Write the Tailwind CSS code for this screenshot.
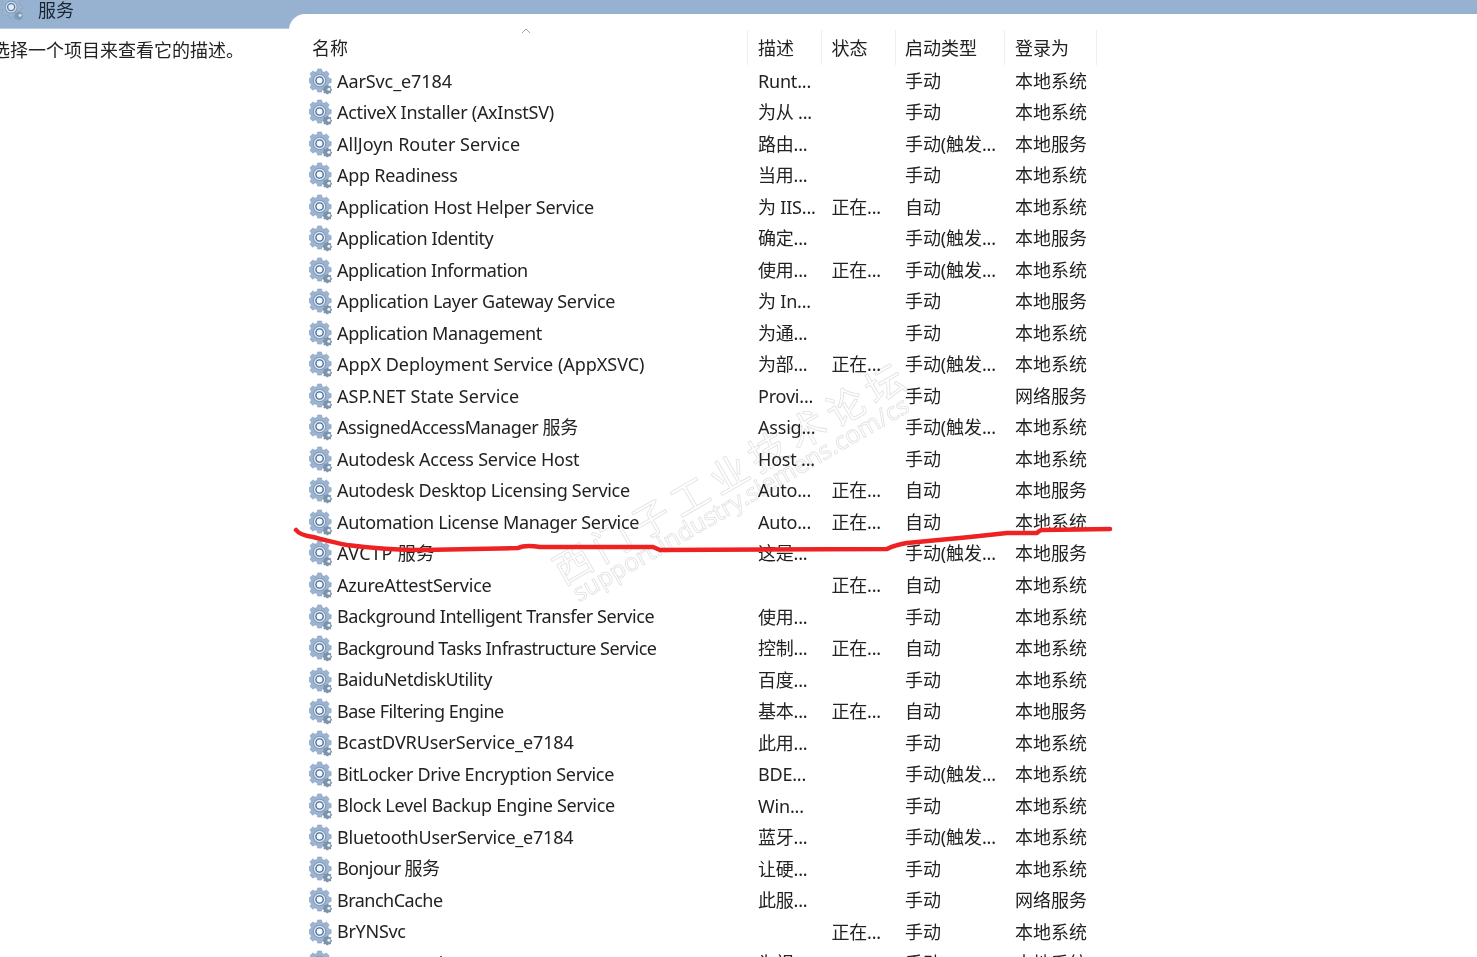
<!DOCTYPE html>
<html lang="zh">
<head>
<meta charset="utf-8">
<title>服务</title>
<script src="https://cdn.jsdelivr.net/npm/@tailwindcss/browser@4"></script>
</head>
<body class="bg-white overflow-hidden">
<svg width="0" height="0" class="absolute">
  <defs>
    <symbol id="gear" viewBox="0 0 26 28">
      <path fill="#9db4d0" stroke="#7e9abc" stroke-width=".6" d="M9 1h4l.6 2.600 2.200.9L18 3l3 3-1.400 2.300.9 2.200 2.500.6v4l-2.500.6-.9 2.200L21 20l-3 3-2.200-1.500-2.200.9L13 25H9l-.6-2.600-2.200-.9L4 23l-3-3 1.500-2.100-.9-2.200L-.5 15v-4l2.100-.4.9-2.200L1 6l3-3 2.200 1.500 2.200-.9z"/>
      <circle cx="11" cy="13" r="6.500" fill="#dfe9f5" stroke="#7e9abc" stroke-width="1.200"/>
      <circle cx="11" cy="13" r="3.800" fill="#f7fafd" stroke="#4a6a94" stroke-width="1.400"/>
      <path fill="#7b93ab" d="M19 16h2.500l.4 1.500 1.300.6 1.300-.8 1.500 1.600-.8 1.300.5 1.300 1.300.4v2.200l-1.300.4-.5 1.300.8 1.200-1.500 1.500-1.300-.7-1.300.5-.4 1.200H19l-.4-1.200-1.300-.5-1.300.7-1.500-1.500.8-1.200-.5-1.300-1.300-.4v-2.200l1.300-.4.5-1.300-.8-1.300 1.500-1.600 1.300.8 1.300-.6z" transform="translate(4.500 6) scale(.72)"/>
      <circle cx="20.700" cy="22" r="1.600" fill="#eef3f8"/>
    </symbol>
  </defs>
</svg>

<div id="page" class="relative w-[1477px] h-[957px] overflow-hidden flex font-['Noto_Sans','Noto_Sans_CJK_SC',sans-serif] text-[18px] text-[#222] blur-[0.35px]">
  <aside class="w-[290px] shrink-0">
    <div class="h-[29px] bg-[#97b2d1] border-b border-[#b9cbe0] flex items-start">
      <svg class="w-[24px] h-[26px] opacity-80 -mt-[5px] ml-[1px] mr-[13px]"><use href="#gear"/></svg>
      <span class="leading-[20px] text-[#1b2530]">服务</span>
    </div>
    <p class="mt-[9px] -ml-[8px] whitespace-nowrap leading-[24px]">选择一个项目来查看它的描述。</p>
  </aside>

  <main class="flex-1 bg-[#97b2d1] -ml-px">
    <div class="mt-[14px] h-full bg-white rounded-tl-[16px] pl-[20px] pt-[16px]">
      <div class="relative h-[35px] w-[788px] grid grid-cols-[439px_74px_74px_109px_92px] items-center leading-none">
        <div class="pl-[3px] pt-[1px] border-r border-[#eeeeee] h-full flex items-center">名称</div>
        <div class="pl-[10px] pt-[1px] border-r border-[#eeeeee] h-full flex items-center">描述</div>
        <div class="pl-[9.500px] pt-[1px] border-r border-[#eeeeee] h-full flex items-center">状态</div>
        <div class="pl-[9px] pt-[1px] border-r border-[#eeeeee] h-full flex items-center">启动类型</div>
        <div class="pl-[10px] pt-[1px] border-r border-[#eeeeee] h-full flex items-center">登录为</div>
        <svg class="absolute left-[212px] -top-[2px] w-[10px] h-[6px]" viewBox="0 0 10 6"><path d="M1 5l4-4 4 4" fill="none" stroke="#9aa3ad" stroke-width="1"/></svg>
      </div>
      <div id="rows" class="mt-[0.5px]"></div>
    </div>
  </main>

  <!-- watermark sits over the list, multiply keeps the text under it dark -->
  <div class="absolute left-[544px] top-[552px] origin-top-left -rotate-[30deg] whitespace-nowrap pointer-events-none mix-blend-multiply text-transparent [-webkit-text-stroke:0.8px_#e2e2e2]">
    <div class="text-[38px] leading-[46px] font-['Noto_Sans_CJK_SC',sans-serif] tracking-[7px]">西门子工业技术论坛</div>
    <div class="text-[24.600px] leading-[30px] -mt-[9px] ml-[5px]">support.industry.siemens.com/cs</div>
  </div>

  <!-- red pen stroke -->
  <svg class="absolute left-0 top-0 pointer-events-none" width="1477" height="957" viewBox="0 0 1477 957">
    <path d="M296 530C299 534 306 536 313 537C325 540 336 543 347 545C370 548 395 550 423 550L518 548C522 546 528 545 540 547L653 547L660 550L887 549C893 546 900 544 907 543L970 537L1007 533L1037 533C1039 531 1041 530 1042 530L1110 529" fill="none" stroke="#ee2222" stroke-width="4.500" stroke-linecap="round" stroke-linejoin="round"/>
  </svg>
</div>

<script>
  // last field: letter spacing of the name, so each one ends where it does in the list
  const data = [
    ["AarSvc_e7184","Runt...","","手动","本地系统",-0.09],
    ["ActiveX Installer (AxInstSV)","为从 ...","","手动","本地系统",-0.28],
    ["AllJoyn Router Service","路由...","","手动(触发...","本地服务",-0.01],
    ["App Readiness","当用...","","手动","本地系统",-0.27],
    ["Application Host Helper Service","为 IIS...","正在...","自动","本地系统",-0.26],
    ["Application Identity","确定...","","手动(触发...","本地服务",-0.42],
    ["Application Information","使用...","正在...","手动(触发...","本地系统",-0.46],
    ["Application Layer Gateway Service","为 In...","","手动","本地服务",-0.30],
    ["Application Management","为通...","","手动","本地系统",-0.37],
    ["AppX Deployment Service (AppXSVC)","为部...","正在...","手动(触发...","本地系统",-0.03],
    ["ASP.NET State Service","Provi...","","手动","网络服务",0.06],
    ["AssignedAccessManager 服务","Assig...","","手动(触发...","本地系统",-0.38],
    ["Autodesk Access Service Host","Host ...","","手动","本地系统",-0.24],
    ["Autodesk Desktop Licensing Service","Auto...","正在...","自动","本地服务",-0.30],
    ["Automation License Manager Service","Auto...","正在...","自动","本地系统",-0.33],
    ["AVCTP 服务","这是...","","手动(触发...","本地服务",0.4],
    ["AzureAttestService","","正在...","自动","本地系统",-0.20],
    ["Background Intelligent Transfer Service","使用...","","手动","本地系统",-0.40],
    ["Background Tasks Infrastructure Service","控制...","正在...","自动","本地系统",-0.52],
    ["BaiduNetdiskUtility","百度...","","手动","本地系统",-0.37],
    ["Base Filtering Engine","基本...","正在...","自动","本地服务",-0.52],
    ["BcastDVRUserService_e7184","此用...","","手动","本地系统",-0.10],
    ["BitLocker Drive Encryption Service","BDE...","","手动(触发...","本地系统",-0.33],
    ["Block Level Backup Engine Service","Win...","","手动","本地系统",-0.30],
    ["BluetoothUserService_e7184","蓝牙...","","手动(触发...","本地系统",-0.23],
    ["Bonjour 服务","让硬...","","手动","本地系统",-0.62],
    ["BranchCache","此服...","","手动","网络服务",-0.51],
    ["BrYNSvc","","正在...","手动","本地系统",-0.28],
    ["CaptureService_e7184","为视...","","手动","本地系统",-0.2]
  ];
  document.getElementById("rows").innerHTML = data.map(r => `
    <div class="h-[31.520px] w-[788px] grid grid-cols-[439px_74px_74px_109px_92px] items-center whitespace-nowrap">
      <div class="flex items-center"><svg class="w-[25px] h-[27px] mr-[3px]"><use href="#gear"/></svg><span class="-mt-[0.5px]" style="letter-spacing:${r[5]}px">${r[0]}</span></div>
      <div class="pl-[10px] tracking-[-0.2px]">${r[1]}</div>
      <div class="pl-[9.500px] tracking-[-0.2px]">${r[2]}</div>
      <div class="pl-[9px] tracking-[-0.1px]">${r[3]}</div>
      <div class="pl-[10px]">${r[4]}</div>
    </div>`).join("");
</script>
</body>
</html>
